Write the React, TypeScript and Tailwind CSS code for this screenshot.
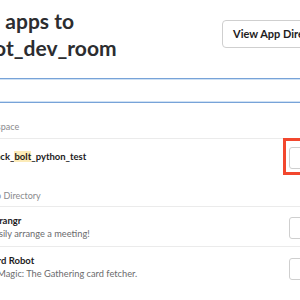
import React from 'react';

type App = {
  name: React.ReactNode;
  desc?: string;
  action: string;
  flagged?: boolean;
};

const installed: App[] = [
  {
    name: (
      <>
        slack_<span className="bg-[#fcebb8]">bolt</span>_python_test
      </>
    ),
    action: 'View',
    flagged: true,
  },
];

const directory: App[] = [
  { name: 'Arrangr', desc: 'Easily arrange a meeting!', action: 'Install' },
  { name: 'Bird Robot', desc: 'A Magic: The Gathering card fetcher.', action: 'Install' },
];

function ActionButton({ label, flagged }: { label: string; flagged?: boolean }) {
  return (
    <div
      className={`w-[77px] shrink-0 border-[3px] p-[3px] ${
        flagged ? 'border-[#f2472e]' : 'border-transparent'
      }`}
    >
      <button className="h-[22px] w-full rounded-[3px] border border-[#cfcfcf] bg-white text-[10px] font-bold text-[#1d1c1d]">
        {label}
      </button>
    </div>
  );
}

function AppRow({ app, height, border }: { app: App; height: string; border?: boolean }) {
  return (
    <div
      className={`flex items-center justify-between ${height} ${
        border ? 'border-b border-[#ebebeb]' : ''
      }`}
    >
      <div className="whitespace-nowrap">
        <div className="text-[9.5px] leading-[13px] font-bold text-[#1d1c1d]">{app.name}</div>
        {app.desc && (
          <div className="text-[9.25px] leading-[13px] text-[#6b6b6d]">{app.desc}</div>
        )}
      </div>
      <ActionButton label={app.action} flagged={app.flagged} />
    </div>
  );
}

export default function App() {
  return (
    <div className="h-[300px] w-[300px] overflow-hidden bg-white font-[Lato,sans-serif]">
      <div className="-ml-[11px] w-[371px]">
        {/* Header */}
        <div className="flex items-center justify-between pt-[7px]">
          <h1 className="-ml-[27px] text-[21px] leading-[27px] font-bold whitespace-nowrap text-[#2c2d30]">
            <span className="block">Add apps to</span>
            <span className="ml-[8px] block">#bot_dev_room</span>
          </h1>
          <button className="h-[28px] w-[138px] shrink-0 rounded-[4px] border border-[#cfcfcf] bg-white pl-[10px] text-left text-[11px] font-bold whitespace-nowrap text-[#1d1c1d]">
            View App Directory
          </button>
        </div>

        {/* Search */}
        <div className="mt-[17px] -ml-[60px] h-[25px] rounded-[4px] border border-[#77a3d8] shadow-[inset_0_0_0_1px_#cfe1f4]" />

        {/* Installed */}
        <div className="mt-[18px] -ml-[14px] border-b border-[#ebebeb] pb-[5px] text-[9px] leading-[12px] whitespace-nowrap text-[#8a8a8d]">
          Workspace
        </div>
        {installed.map((app, i) => (
          <AppRow key={i} app={app} height="h-[35px]" />
        ))}

        {/* Directory */}
        <div className="mt-[16px] -ml-[4px] border-b border-[#ebebeb] pb-[4px] text-[9px] leading-[12px] whitespace-nowrap text-[#8a8a8d]">
          App Directory
        </div>
        {directory.map((app, i) => (
          <AppRow key={i} app={app} height="h-[40px]" border={i === 0} />
        ))}
      </div>
    </div>
  );
}
